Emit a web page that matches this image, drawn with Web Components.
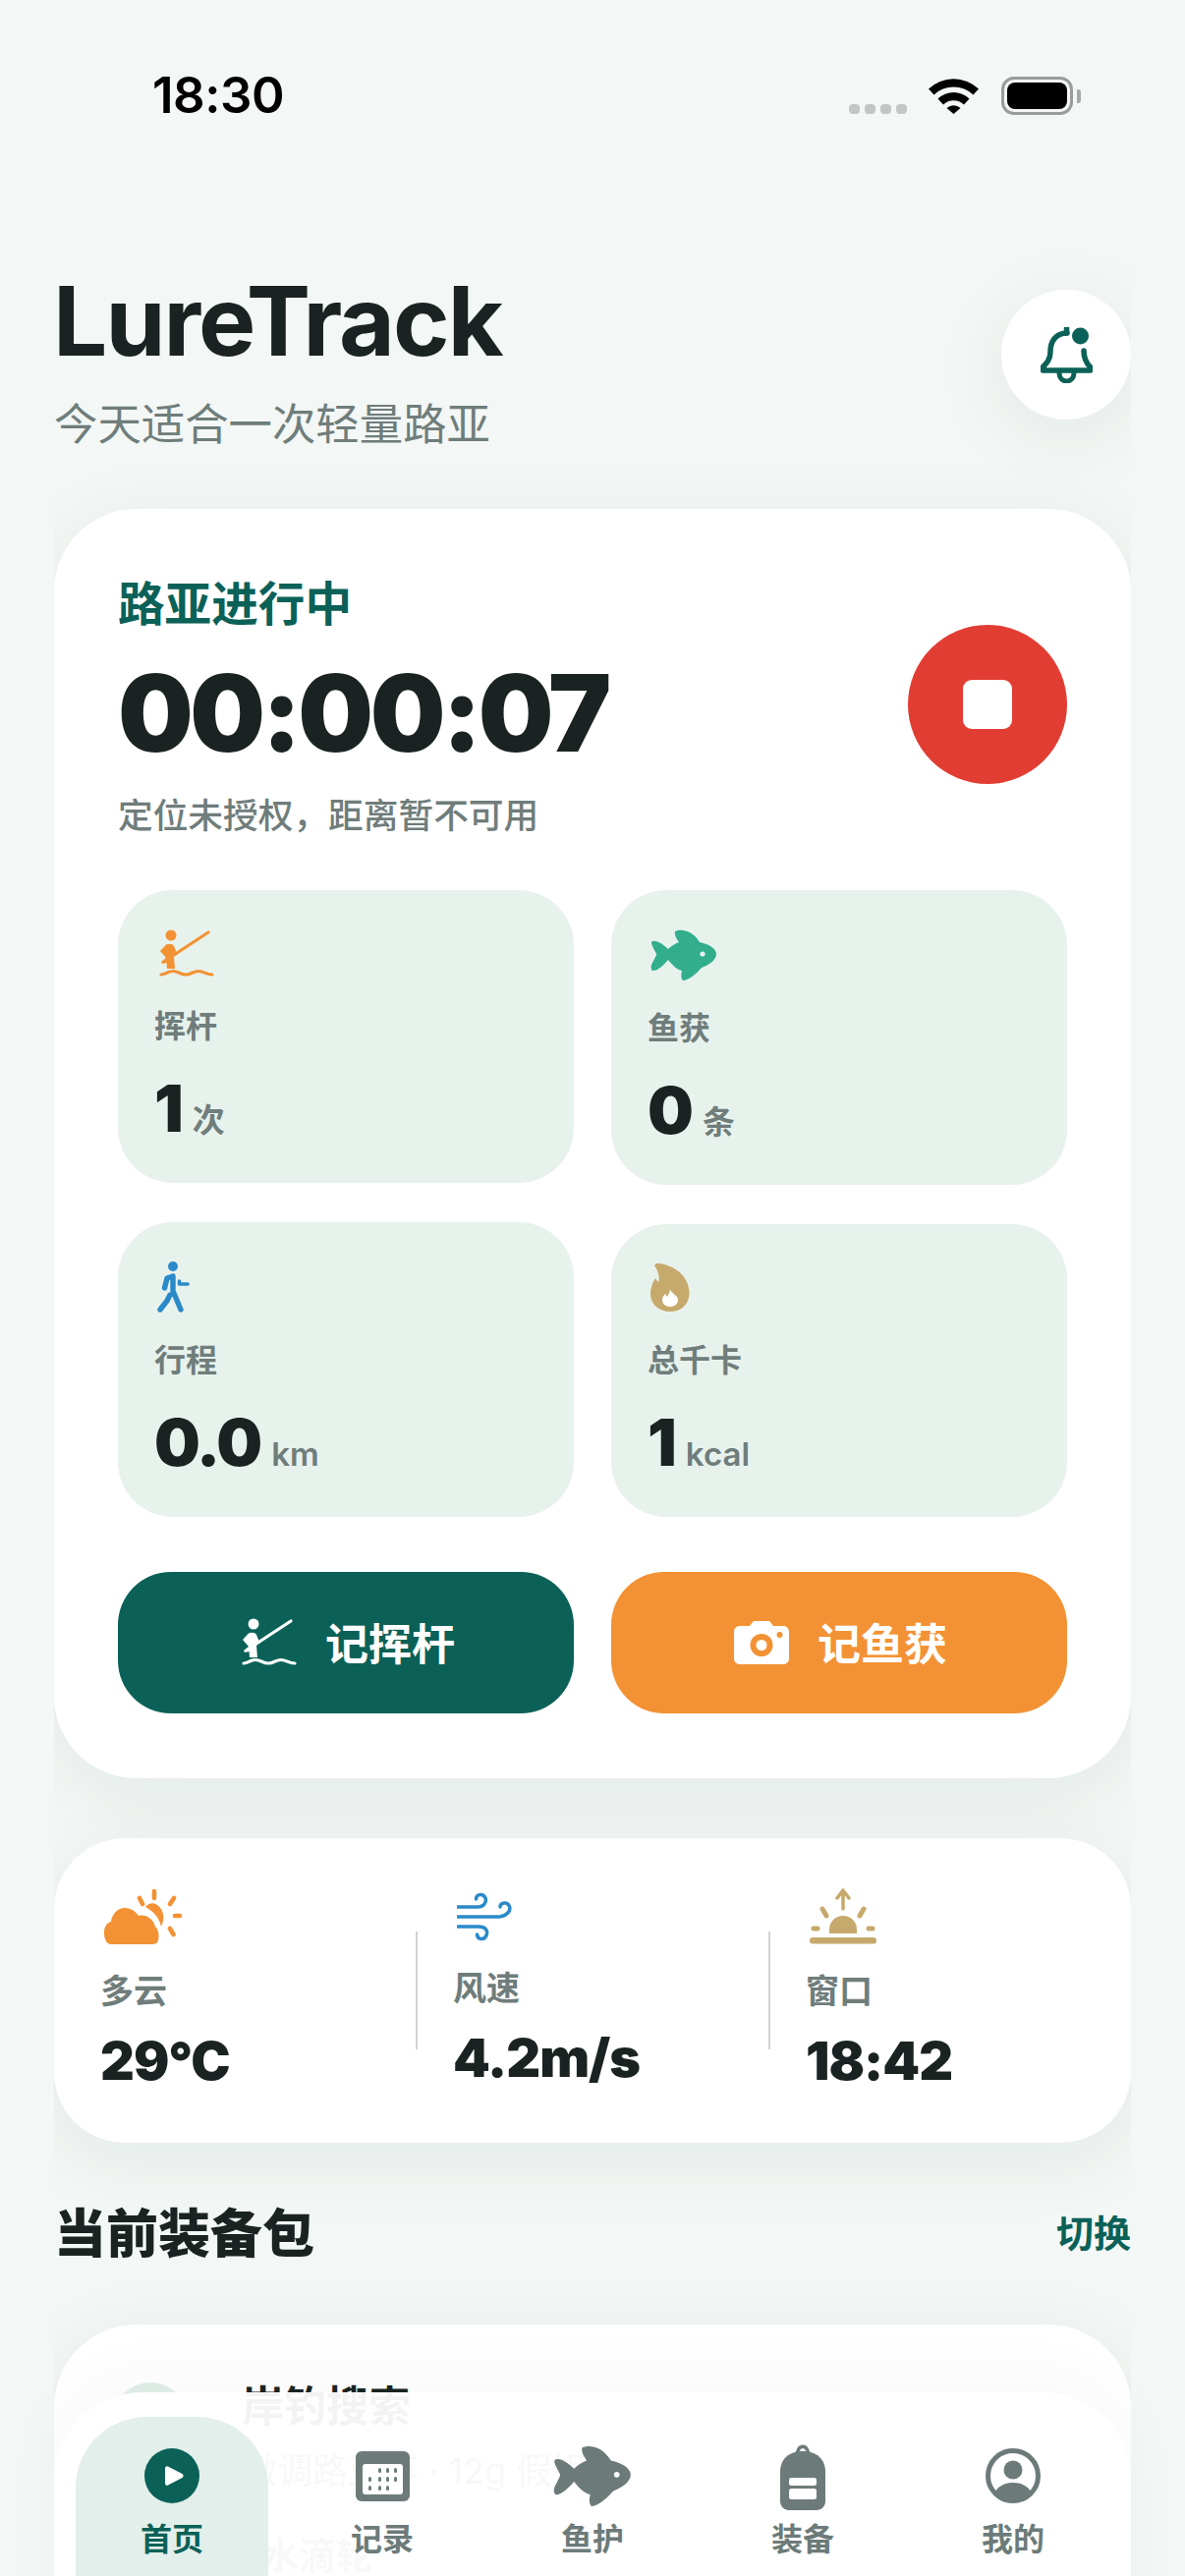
<!DOCTYPE html>
<html lang="zh-CN">
<head>
<meta charset="utf-8">
<title>LureTrack</title>
<style>
  html, body { margin: 0; padding: 0; background: #f3f7f5; }
  body { font-family: Inter, "Noto Sans CJK SC", sans-serif; color: #1a2321; }
</style>
</head>
<body>
<app-shell>
  <status-bar time="18:30"></status-bar>
  <app-header>
    <span slot="title">LureTrack</span>
    <span slot="subtitle">今天适合一次轻量路亚</span>
  </app-header>

  <session-card>
    <span slot="state">路亚进行中</span>
    <span slot="timer">00:00:07</span>
    <span slot="hint">定位未授权，距离暂不可用</span>

    <stat-tile slot="left" icon="fisher" color="#f39234">
      <span slot="label">挥杆</span><span slot="value">1</span><span slot="unit">次</span>
    </stat-tile>
    <stat-tile slot="left" icon="walker" color="#2a8ac9">
      <span slot="label">行程</span><span slot="value">0.0</span><span slot="unit">km</span>
    </stat-tile>
    <stat-tile slot="right" icon="fish" color="#32ae8c">
      <span slot="label">鱼获</span><span slot="value">0</span><span slot="unit">条</span>
    </stat-tile>
    <stat-tile slot="right" icon="flame" color="#c6a96c">
      <span slot="label">总千卡</span><span slot="value">1</span><span slot="unit">kcal</span>
    </stat-tile>

    <action-button slot="actions" icon="fisher" color="#0b6157">记挥杆</action-button>
    <action-button slot="actions" icon="camera" color="#f39234">记鱼获</action-button>
  </session-card>

  <weather-card>
    <weather-item icon="cloudsun" color="#f39234"><span slot="label">多云</span>29°C</weather-item>
    <weather-item icon="wind" color="#2a8ac9"><span slot="label">风速</span>4.2m/s</weather-item>
    <weather-item icon="sunrise" color="#c6a96c"><span slot="label">窗口</span>18:42</weather-item>
  </weather-card>

  <section-head action="切换">当前装备包</section-head>

  <gear-card>
    <span slot="name">岸钓搜索</span>
    <span slot="rod">微调路亚竿 · 12g 假饵</span>
    <span slot="reel">水滴轮</span>
  </gear-card>

  <tab-bar slot="overlay">
    <tab-item icon="home" active>首页</tab-item>
    <tab-item icon="calendar">记录</tab-item>
    <tab-item icon="navfish">鱼护</tab-item>
    <tab-item icon="bag">装备</tab-item>
    <tab-item icon="person">我的</tab-item>
  </tab-bar>
</app-shell>

<script>
const FISH_PATH = "M1 13C3 10 10 12 18 20C21 17 25 14.5 29 13C27 10 24 6 25 2C31-1 43 1 50 13C60 15 67 20 67 25C67 31 60 36 52 39C46 46 38 52 33 52C31 50 31 46 32 42C27 41 23 37 18 31C13 37 6 43 2 42C0 40 0 37 3 32C5 28 6 27 6 25C5 22 1 17 1 13Z";
const CARD_SHADOW = "0 16px 80px rgba(20, 50, 45, .07)";

// every icon: [width, height, svg body], drawn in its own pixel box
const ICONS = {
  fisher: [58, 50, `
    <circle cx="14" cy="6" r="5.5" fill="currentColor"/>
    <path d="M20 24 52 3" fill="none" stroke="currentColor" stroke-width="3.2" stroke-linecap="round"/>
    <path d="M9 15.5C12 14 16 14.5 17 17L19 22 21 25 17 28 18 40H10L9.5 34 5 35 4 33 9 29 3 22Z" fill="currentColor"/>
    <path d="M4 46C9 46 10 42.5 16 42.5S23 46 29 46 36 42.5 42 42.5 49 46 56 46" fill="none" stroke="currentColor" stroke-width="3.2" stroke-linecap="round"/>`],
  fish: [68, 52, `
    <path d="${FISH_PATH}" fill="currentColor"/>
    <circle cx="53" cy="25" r="2.6" fill="#e8f2ed"/>`],
  navfish: [68, 52, `
    <path d="${FISH_PATH}" fill="currentColor"/>
    <circle cx="55" cy="25" r="2.4" fill="#fff"/>`],
  walker: [34, 52, `
    <circle cx="16" cy="5" r="5" fill="currentColor"/>
    <path d="M16 15 10 17 7.5 27M16 15V30L24 49M13 34 10 40 3 49" fill="none" stroke="currentColor" stroke-width="5.4" stroke-linecap="round" stroke-linejoin="round"/>
    <path d="M22.5 20V23H31" fill="none" stroke="currentColor" stroke-width="3.6" stroke-linecap="round" stroke-linejoin="round"/>`],
  flame: [40, 50, `
    <path d="M6 0C20 0 39 10 39.500 30C39.500 42 31 49 20 49C8 49 0 41 0 31C0 24 3 18 5 15C6 17 7 18 8 19C10 14 8 8 4 2Z" fill="currentColor"/>
    <path d="M20 26C21 31 28 32 28 37C28 41.500 24 44 20 44C16 44 12 41.500 12 37C12 34 14 32 15 31C16 32 16 33 17 34C18 32 20 29 20 26Z" fill="#fff"/>`],
  camera: [56, 44, `
    <path d="M6 5H16L19 1C19.500.4 20 0 21 0H35C36 0 36.500.4 37 1L40 5H50C53.500 5 56 7.500 56 11V38C56 41.500 53.500 44 50 44H6C2.500 44 0 41.500 0 38V11C0 7.500 2.500 5 6 5Z" fill="currentColor"/>
    <circle cx="28" cy="24.500" r="11.500" fill="#f39234"/>
    <circle cx="28" cy="24.500" r="5.500" fill="#fff"/>
    <circle cx="46.500" cy="14" r="3" fill="#f39234"/>`],
  cloudsun: [80, 56, `
    <path d="M7 56C2 56 0 50 0 44C0 38 3 34 7 33C8 25 14 19 21 19C28 19 32 23 35 27C42 25 50 30 52 38C56 42 56 48 55 52C54 55 52 56 49 56Z" fill="currentColor"/>
    <path d="M42 18C45 14 50 13 54 16C61 21 62 30 58 38C56 29 51 23 42 18Z" fill="currentColor"/>
    <path d="M51 2V9M36 9 39 15M71 9 67 15M72 27H77M67 40 70.500 46" fill="none" stroke="currentColor" stroke-width="4.600" stroke-linecap="round"/>`],
  wind: [56, 50, `
    <path d="M1 15H21C28 15 31 9 28.500 5C26 1 19.500 2 19.500 7M1 25H42C50 25 56 19 53 13.500C51 9.500 44 10.500 44 15M1 35H22C29 35 32 39 30 44C28 49 21 48.500 20.500 43" fill="none" stroke="currentColor" stroke-width="3.500" stroke-linecap="round"/>`],
  sunrise: [68, 57, `
    <path d="M34 21V2M28 10 34 2 40 10" fill="none" stroke="currentColor" stroke-width="3.500" stroke-linecap="round" stroke-linejoin="round"/>
    <path d="M13 21 17 28M55 21 51 28M4 41H8M60 41H64" fill="none" stroke="currentColor" stroke-width="5" stroke-linecap="round"/>
    <path d="M20 46V42A14 14 0 0 1 48 42V46Z" fill="currentColor"/>
    <rect y="50" width="68" height="6.500" rx="3" fill="currentColor"/>`],
  home: [56, 56, `
    <circle cx="28" cy="28" r="28" fill="currentColor"/>
    <path d="M21 20.500C21 18.500 23 17.500 24.500 18.700L38.500 26C40 27 40 29 38.500 30L24.500 37.300C23 38.500 21 37.500 21 35.500Z" fill="#fff"/>`],
  calendar: [55, 51, `
    <rect width="55" height="51" rx="6" fill="currentColor"/>
    <rect x="7" y="13" width="41" height="31" rx="3" fill="#fff"/>
    <g fill="currentColor">
      <rect x="23" y="17" width="3" height="5" rx="1.500"/><rect x="31" y="17" width="3" height="5" rx="1.500"/><rect x="39" y="17" width="3" height="5" rx="1.500"/>
      <rect x="13" y="26" width="3" height="5" rx="1.500"/><rect x="23" y="26" width="3" height="5" rx="1.500"/><rect x="31" y="26" width="3" height="5" rx="1.500"/><rect x="39" y="26" width="3" height="5" rx="1.500"/>
      <rect x="13" y="35" width="3" height="5" rx="1.500"/><rect x="23" y="35" width="3" height="5" rx="1.500"/><rect x="31" y="35" width="3" height="5" rx="1.500"/>
    </g>`],
  bag: [46, 69, `
    <path d="M17 14C17 1 29 1 29 14" fill="none" stroke="currentColor" stroke-width="3.500"/>
    <path d="M23 9C37 9 46 17 46 30V60C46 65 42 69 37 69H9C4 69 0 65 0 60V30C0 17 9 9 23 9Z" fill="currentColor"/>
    <rect x="9" y="36" width="28" height="8" rx="2.500" fill="#fff"/>
    <rect x="9" y="47" width="28" height="11" rx="2.500" fill="#fff"/>`],
  person: [56, 56, `
    <circle cx="28" cy="28" r="25.500" fill="#fff" stroke="currentColor" stroke-width="5"/>
    <circle cx="28" cy="22" r="9.500" fill="currentColor"/>
    <path d="M9.500 45C13 38 20 35 28 35S43 38 46.500 45C42 50 35 53.500 28 53.500S14 50 9.500 45Z" fill="currentColor"/>`],
  bell: [53, 57, `
    <path d="M27 6C15 6 10 15 10 25C10 33 6 37 2.500 40.500V44H50.500V40.500C47 37 44 33 44 24" fill="none" stroke="currentColor" stroke-width="5.500" stroke-linejoin="round" stroke-linecap="round"/>
    <path d="M26.500 1V6" fill="none" stroke="currentColor" stroke-width="5.500" stroke-linecap="round"/>
    <path d="M19 46C19 58 34 58 34 46" fill="none" stroke="currentColor" stroke-width="5"/>
    <circle cx="40.500" cy="9" r="8.500" fill="currentColor"/>`],
  wifi: [51, 37, `
    <path d="M0 11.500A37 37 0 0 1 51 11.500L45.500 17.500A29 29 0 0 0 5.500 17.500Z M9.500 21.500A23 23 0 0 1 41.500 21.500L36 27.500A15 15 0 0 0 15 27.500Z M18.500 31A10 10 0 0 1 32.500 31L25.500 37Z" fill="#000"/>`]
};

function icon(name) {
  const [w, h, body] = ICONS[name];
  return `<svg width="${w}" height="${h}" viewBox="0 0 ${w} ${h}" style="display:block;flex:none">${body}</svg>`;
}

class AppShell extends HTMLElement {
  connectedCallback() {
    this.attachShadow({ mode: "open" });
    this.shadowRoot.innerHTML = `
      <style>
        :host { display: block; position: relative; width: 1206px; height: 2622px; overflow: hidden; background: #f3f7f5; }
        .scroll { display: flow-root; margin: 0 55px; overflow-x: clip; overflow-y: visible; }
      </style>
      <div class="scroll"><slot></slot></div>
      <slot name="overlay"></slot>
    `;
  }
}

class StatusBar extends HTMLElement {
  connectedCallback() {
    this.attachShadow({ mode: "open" });
    this.shadowRoot.innerHTML = `
      <style>
        :host { display: block; height: 176px; margin: 0 -55px; position: relative; }
        .bar { display: flex; justify-content: space-between; padding: 72px 106px 0 155px; }
        .time { font: 600 51px/50px Inter, sans-serif; color: #000; letter-spacing: -0.5px; }
        .right { display: flex; align-items: flex-start; padding-top: 7px; }
        .dots { display: flex; gap: 5px; margin: 27px 22px 0 0; }
        .dots i { width: 11px; height: 10px; border-radius: 4px; background: #c4c6c6; }
        .batt { width: 73px; height: 39px; box-sizing: border-box; margin-left: 23px; margin-top: -1px; border: 3px solid #9a9c9b; border-radius: 13px; padding: 3px; }
        .batt b { display: block; height: 100%; background: #000; border-radius: 8px; }
        .cap { width: 4px; height: 14px; margin: 12px 0 0 4px; background: #a6a8a7; border-radius: 0 3px 3px 0; }
      </style>
      <div class="bar">
        <div class="time">${this.getAttribute("time")}</div>
        <div class="right">
          <div class="dots"><i></i><i></i><i></i><i></i></div>
          ${icon("wifi")}
          <div class="batt"><b></b></div><div class="cap"></div>
        </div>
      </div>
    `;
  }
}

class AppHeader extends HTMLElement {
  connectedCallback() {
    this.attachShadow({ mode: "open" });
    this.shadowRoot.innerHTML = `
      <style>
        :host { display: flex; justify-content: space-between; align-items: flex-start; height: 342px; }
        .title { font-size: 98px; line-height: 110px; font-weight: 700; letter-spacing: -2px; color: #1a2321; margin: 96px 0 0 -1px; }
        .sub { font-size: 44.4px; line-height: 60px; margin-top: 20px; color: #6f7d7b; }
        .bell { width: 132px; height: 132px; margin: 119px 0 0; border-radius: 50%; background: #fff; color: #0b6157;
                display: flex; align-items: center; justify-content: center;
                box-shadow: ${CARD_SHADOW}; }
      </style>
      <div>
        <div class="title"><slot name="title"></slot></div>
        <div class="sub"><slot name="subtitle"></slot></div>
      </div>
      <div class="bell">${icon("bell")}</div>
    `;
  }
}

class SessionCard extends HTMLElement {
  connectedCallback() {
    this.attachShadow({ mode: "open" });
    this.shadowRoot.innerHTML = `
      <style>
        :host { display: block; box-sizing: border-box; height: 1292px; padding: 69px 65px 0; background: #fff; border-radius: 84px;
                box-shadow: ${CARD_SHADOW}; }
        .top { display: flex; justify-content: space-between; align-items: center; }
        .state { font-size: 47.6px; line-height: 56px; font-weight: 600; color: #0b6157; }
        .timer { font-size: 108px; line-height: 124px; font-weight: 900; letter-spacing: -3.5px; color: #1a2321; margin: 21px 0 0; }
        .hint { font-size: 35.7px; line-height: 44px; font-weight: 500; color: #6f7d7b; margin-top: 20px; }
        .stop { width: 162px; height: 162px; border-radius: 50%; background: #e23d33; display: flex; align-items: center; justify-content: center; margin-top: -5px; }
        .stop i { width: 50px; height: 50px; border-radius: 9px; background: #fff; }
        .stats { display: flex; gap: 38px; align-items: center; margin-top: 54px; }
        .col { flex: 1; display: flex; flex-direction: column; gap: 40px; }
        .actions { display: flex; gap: 38px; margin-top: 56px; }
      </style>
      <div class="top">
        <div>
          <div class="state"><slot name="state"></slot></div>
          <div class="timer"><slot name="timer"></slot></div>
          <div class="hint"><slot name="hint"></slot></div>
        </div>
        <div class="stop"><i></i></div>
      </div>
      <div class="stats">
        <div class="col"><slot name="left"></slot></div>
        <div class="col"><slot name="right"></slot></div>
      </div>
      <div class="actions"><slot name="actions"></slot></div>
    `;
  }
}

class StatTile extends HTMLElement {
  connectedCallback() {
    this.attachShadow({ mode: "open" });
    this.shadowRoot.innerHTML = `
      <style>
        :host { display: block; box-sizing: border-box; padding: 40px 37px 37px; background: #e8f2ed; border-radius: 56px; }
        .icon { color: ${this.getAttribute("color")}; margin-left: 3px; }
        .label { font-size: 32px; line-height: 40px; font-weight: 600; color: #6f7d7b; margin-top: 29px; }
        .row { display: flex; align-items: baseline; gap: 11px; margin-top: 24px; height: 78px; }
        .value { font-size: 66px; line-height: 78px; font-weight: 900; letter-spacing: -2px; color: #1a2321; }
        .unit { font-size: 33px; font-weight: 600; color: #6f7d7b; }
      </style>
      <div class="icon">${icon(this.getAttribute("icon"))}</div>
      <div class="label"><slot name="label"></slot></div>
      <div class="row">
        <span class="value"><slot name="value"></slot></span>
        <span class="unit"><slot name="unit"></slot></span>
      </div>
    `;
  }
}

class ActionButton extends HTMLElement {
  connectedCallback() {
    this.attachShadow({ mode: "open" });
    this.shadowRoot.innerHTML = `
      <style>
        :host { flex: 1; display: flex; align-items: center; justify-content: center; gap: 29px; height: 144px; box-sizing: border-box; padding-left: 3px; border-radius: 54px;
                background: ${this.getAttribute("color")}; color: #fff; font-size: 44px; font-weight: 700; }
        span { padding-bottom: 3px; }
      </style>
      ${icon(this.getAttribute("icon"))}
      <span><slot></slot></span>
    `;
  }
}

class WeatherCard extends HTMLElement {
  connectedCallback() {
    this.attachShadow({ mode: "open" });
    this.shadowRoot.innerHTML = `
      <style>
        :host { display: grid; grid-template-columns: 321px 359px 1fr; align-items: center; box-sizing: border-box; height: 310px; margin-top: 61px; padding: 0 47px;
                background: #fff; border-radius: 72px; box-shadow: ${CARD_SHADOW}; }
      </style>
      <slot></slot>
    `;
  }
}

class WeatherItem extends HTMLElement {
  connectedCallback() {
    this.attachShadow({ mode: "open" });
    this.shadowRoot.innerHTML = `
      <style>
        :host { display: block; position: relative; color: ${this.getAttribute("color")}; }
        :host(:not(:first-child)) { padding-left: 38px; }
        :host(:not(:first-child))::before { content: ""; position: absolute; left: 0; top: 50%; height: 120px; margin-top: -60px; width: 1.5px; background: #cfd4d2; }
        .label { font-size: 34px; line-height: 42px; font-weight: 600; color: #6f7d7b; margin-top: 27px; }
        .value { font-size: 54px; line-height: 64px; font-weight: 900; letter-spacing: -1px; color: #1a2321; margin-top: 18px; }
        .icon { margin-left: 4px; }
      </style>
      <div class="icon">${icon(this.getAttribute("icon"))}</div>
      <div class="label"><slot name="label"></slot></div>
      <div class="value"><slot></slot></div>
    `;
  }
}

class SectionHead extends HTMLElement {
  connectedCallback() {
    this.attachShadow({ mode: "open" });
    this.shadowRoot.innerHTML = `
      <style>
        :host { display: flex; justify-content: space-between; align-items: center; margin-top: 57px; height: 64px; }
        .title { font-size: 53px; font-weight: 800; color: #1a2321; }
        .action { font-size: 38px; font-weight: 700; color: #0b6157; }
      </style>
      <div class="title"><slot></slot></div>
      <div class="action">${this.getAttribute("action")}</div>
    `;
  }
}

class GearCard extends HTMLElement {
  connectedCallback() {
    this.attachShadow({ mode: "open" });
    this.shadowRoot.innerHTML = `
      <style>
        :host { display: block; box-sizing: border-box; height: 420px; margin-top: 64px; padding: 59px 60px 0; background: #fff; border-radius: 84px;
                box-shadow: ${CARD_SHADOW}; }
        .row { display: flex; gap: 55px; }
        .avatar { width: 76px; height: 76px; flex: none; border-radius: 50%; background: #e2efea; }
        .name { font-size: 43px; line-height: 48px; font-weight: 700; color: #1a2321; }
        .rod { font-size: 36px; line-height: 44px; color: #6f7d7b; margin-top: 20px; }
        .reel { font-size: 38px; line-height: 48px; font-weight: 600; color: #6f7d7b; margin-top: 40px; margin-left: 20px; }
      </style>
      <div class="row">
        <div class="avatar"></div>
        <div>
          <div class="name"><slot name="name"></slot></div>
          <div class="rod"><slot name="rod"></slot></div>
          <div class="reel"><slot name="reel"></slot></div>
        </div>
      </div>
    `;
  }
}

class TabBar extends HTMLElement {
  connectedCallback() {
    this.attachShadow({ mode: "open" });
    this.shadowRoot.innerHTML = `
      <style>
        :host { position: absolute; left: 55px; top: 2435px; width: 1096px; height: 320px; box-sizing: border-box; padding: 25px 22px 0;
                display: grid; grid-template-columns: repeat(5, 196px); column-gap: 18px; align-items: start;
                background: rgba(255, 255, 255, .95); border-radius: 90px; box-shadow: 0 -20px 60px rgba(20, 50, 45, .03); }
      </style>
      <slot></slot>
    `;
  }
}

class TabItem extends HTMLElement {
  connectedCallback() {
    const active = this.hasAttribute("active");
    const name = this.getAttribute("icon");
    this.attachShadow({ mode: "open" });
    this.shadowRoot.innerHTML = `
      <style>
        :host { display: flex; flex-direction: column; align-items: center; height: 240px; box-sizing: border-box; padding-top: 25px;
                border-radius: 72px; background: ${active ? "#e2efea" : "transparent"}; color: ${active ? "#0b6157" : "#6c7b79"}; }
        .icon { height: 70px; display: flex; align-items: center; justify-content: center; }
        .icon svg { ${name === "navfish" ? "width: 80px !important; height: 62px !important;" : ""} }
        .label { font-size: 32px; line-height: 40px; font-weight: ${active ? 700 : 600}; margin-top: 10px; }
      </style>
      <div class="icon">${icon(name).replace('<svg', name === "navfish" ? '<svg preserveAspectRatio="none"' : '<svg')}</div>
      <div class="label"><slot></slot></div>
    `;
  }
}

customElements.define("app-shell", AppShell);
customElements.define("status-bar", StatusBar);
customElements.define("app-header", AppHeader);
customElements.define("session-card", SessionCard);
customElements.define("stat-tile", StatTile);
customElements.define("action-button", ActionButton);
customElements.define("weather-card", WeatherCard);
customElements.define("weather-item", WeatherItem);
customElements.define("section-head", SectionHead);
customElements.define("gear-card", GearCard);
customElements.define("tab-bar", TabBar);
customElements.define("tab-item", TabItem);
</script>
</body>
</html>
